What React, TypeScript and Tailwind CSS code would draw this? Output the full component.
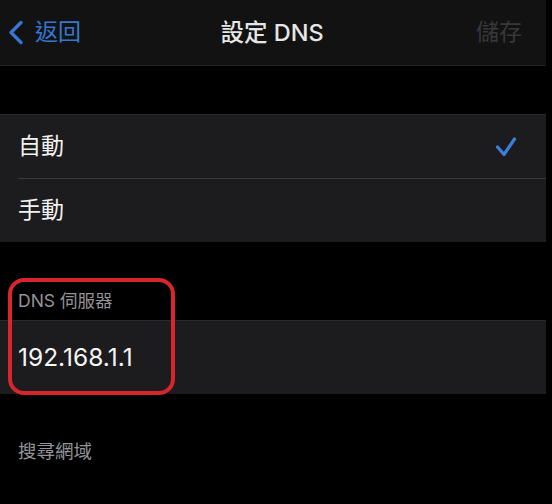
import React from "react";

const font = { fontFamily: '"Inter", "Noto Sans CJK TC", "Noto Sans", sans-serif' };

export default function App() {
  return (
    <div className="relative w-[552px] h-[504px] bg-black overflow-hidden" style={font}>
      <div className="w-[546px]">
        {/* Header */}
        <div className="relative h-[66px] bg-[#121212] border-b border-[#222224] flex items-center">
          <div className="flex items-center pl-[8px] text-[#3478d4]">
            <svg width="16" height="26" viewBox="0 0 16 26" className="mr-[11px]">
              <polyline points="13,2.5 3,12.5 13,22.5" fill="none" stroke="#3478d4" strokeWidth="3.4" strokeLinecap="round" strokeLinejoin="round" />
            </svg>
            <span className="text-[23px] leading-none">返回</span>
          </div>
          <div className="absolute left-0 right-0 text-center text-[23.5px] leading-none text-[#e6e6e6] font-medium pointer-events-none pr-[2px]">
            設定 DNS
          </div>
          <div className="ml-auto pr-[24px] text-[23px] leading-none text-[#38383a]">儲存</div>
        </div>

        <div className="h-[48px]" />

        {/* Mode group */}
        <div className="bg-[#1c1c1e] border-t border-[#2a2a2c]">
          <div className="h-[63px] flex items-center pl-[18px] pr-[29px]">
            <span className="text-[23px] text-[#f2f2f2] leading-none">自動</span>
            <svg width="22" height="22" viewBox="0 0 22 22" className="ml-auto">
              <polyline points="2.5,11 9,18.5 19.5,3" fill="none" stroke="#3a7fdc" strokeWidth="3.2" strokeLinecap="round" strokeLinejoin="round" />
            </svg>
          </div>
          <div className="ml-[18px] h-px bg-[#38383a]" />
          <div className="h-[63px] flex items-center pl-[18px]">
            <span className="text-[23px] text-[#f2f2f2] leading-none">手動</span>
          </div>
        </div>

        {/* DNS label */}
        <div className="h-[78px] flex items-end pl-[18px] pb-[11px]">
          <span className="text-[17.5px] leading-none text-[#939398]">DNS 伺服器</span>
        </div>

        <div className="h-[74px] bg-[#1c1c1e] border-t border-[#2a2a2c] flex items-center pl-[18px]">
          <span className="text-[24.5px] leading-none text-[#f5f5f5]">192.168.1.1</span>
        </div>

        <div className="pt-[46px] pl-[18px]">
          <span className="text-[18.5px] leading-none text-[#939398]">搜尋網域</span>
        </div>
      </div>

      {/* red annotation */}
      <div className="absolute left-[8px] top-[278px] w-[167px] h-[117px] border-[4px] border-[#d8262c] rounded-[16px] pointer-events-none" />
    </div>
  );
}
